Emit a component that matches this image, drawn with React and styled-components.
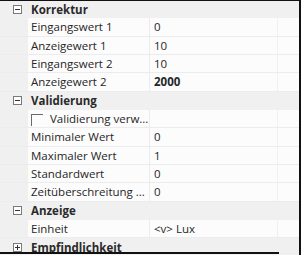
import React from 'react';
import styled, { createGlobalStyle } from 'styled-components';

const GlobalStyle = createGlobalStyle`
  html, body {
    margin: 0;
    padding: 0;
    background: #f3f3f3;
  }
  body {
    font-family: "Open Sans", "Noto Sans", sans-serif;
    font-size: 11.5px;
    color: #262626;
  }
`;

const sections = [
  {
    title: 'Korrektur',
    rows: [
      { name: 'Eingangswert 1', value: '0' },
      { name: 'Anzeigewert 1', value: '10' },
      { name: 'Eingangswert 2', value: '10' },
      { name: 'Anzeigewert 2', value: '2000', bold: true },
    ],
  },
  {
    title: 'Validierung',
    rows: [
      { name: 'Validierung verw...', value: '', check: true },
      { name: 'Minimaler Wert', value: '0' },
      { name: 'Maximaler Wert', value: '1' },
      { name: 'Standardwert', value: '0' },
      { name: 'Zeitüberschreitung ...', value: '0' },
    ],
  },
  {
    title: 'Anzeige',
    rows: [{ name: 'Einheit', value: '<v> Lux' }],
  },
  { title: 'Empfindlichkeit', rows: [], collapsed: true },
];

const ExpandBox = ({ collapsed }) => (
  <svg width="9" height="9" viewBox="0 0 9 9">
    <rect x="0.5" y="0.5" width="8" height="8" fill="#fff" stroke="#7a7a7a" />
    <line x1="2" y1="4.5" x2="7" y2="4.5" stroke="#333" />
    {collapsed && <line x1="4.5" y1="2" x2="4.5" y2="7" stroke="#333" />}
  </svg>
);

const App = () => (
  <>
    <GlobalStyle />
    <Frame>
      <Grid>
        {sections.map((s) => (
          <React.Fragment key={s.title}>
            <CategoryRow>
              <Gutter>
                <ExpandBox collapsed={s.collapsed} />
              </Gutter>
              <CategoryTitle>{s.title}</CategoryTitle>
            </CategoryRow>
            {s.rows.map((r) => (
              <PropRow key={r.name}>
                <Gutter />
                <NameCell>
                  {r.check && <CheckBox />}
                  {r.name}
                </NameCell>
                <ValueCell $bold={r.bold}>{r.value}</ValueCell>
                <EndCell />
              </PropRow>
            ))}
          </React.Fragment>
        ))}
      </Grid>
      <Footer>
        <FooterLine />
        <FooterFill />
      </Footer>
    </Frame>
  </>
);

const Frame = styled.div`
  width: 299px;
  height: 254px;
  border-top: 1px solid #111;
  border-right: 2px solid #111;
  display: flex;
  flex-direction: column;
  overflow: hidden;
`;

const Grid = styled.div`
  height: 252px;
  overflow: hidden;
  background: #f0f0f0;
  display: flex;
  flex-direction: column;
  margin-top: -1px;
`;

const rowBase = `
  flex: 0 0 18.33px;
  height: 18.33px;
  display: flex;
  align-items: center;
  box-sizing: border-box;
`;

const CategoryRow = styled.div`
  ${rowBase}
  background: #f0f0f0;
`;

const PropRow = styled.div`
  ${rowBase}
  background: #fcfcfc;
  border-bottom: 1px solid #ececec;
`;

const Gutter = styled.div`
  width: 28px;
  align-self: stretch;
  background: #f0f0f0;
  display: flex;
  align-items: center;
  padding-left: 13px;
  box-sizing: border-box;
  flex: none;
`;

const CategoryTitle = styled.div`
  font-weight: 700;
  color: #2a2a2a;
  padding-left: 3px;
  white-space: nowrap;
`;

const NameCell = styled.div`
  width: 122px;
  flex: none;
  align-self: stretch;
  display: flex;
  align-items: center;
  padding-left: 3px;
  box-sizing: border-box;
  white-space: nowrap;
  overflow: hidden;
  border-right: 1px solid #ececec;
`;

const CheckBox = styled.span`
  width: 12px;
  height: 12px;
  flex: none;
  border-top: 1px solid #6a6a6a;
  border-left: 1px solid #6a6a6a;
  margin-right: 7px;
  margin-top: 2px;
  box-sizing: border-box;
`;

const ValueCell = styled.div`
  width: 128px;
  flex: none;
  align-self: stretch;
  display: flex;
  align-items: center;
  padding-left: 4px;
  box-sizing: border-box;
  font-weight: ${(p) => (p.$bold ? 700 : 400)};
  border-right: 1px solid #f0f0f0;
  white-space: nowrap;
`;

const EndCell = styled.div`
  flex: 1;
  align-self: stretch;
`;

const Footer = styled.div`
  flex: 1;
  display: flex;
`;

const FooterLine = styled.div`
  width: 279px;
  height: 2px;
  background: #111;
`;

const FooterFill = styled.div`
  flex: 1;
  background: #f0f0f0;
`;

export default App;
